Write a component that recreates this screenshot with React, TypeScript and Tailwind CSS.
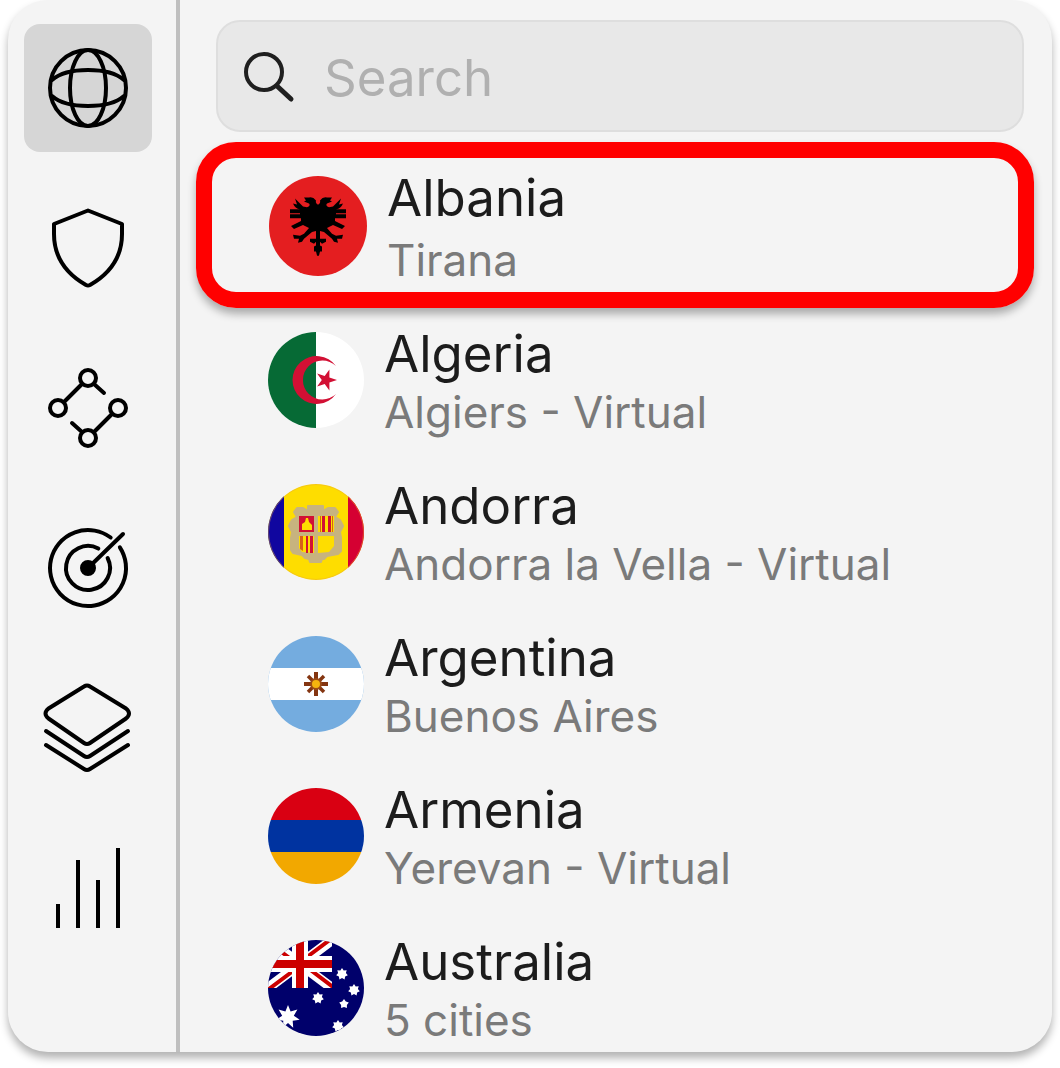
import type { ReactNode } from "react";

const line = {
  fill: "none",
  stroke: "#000",
  strokeWidth: 4,
  strokeLinecap: "round" as const,
  strokeLinejoin: "round" as const,
};

function GlobeIcon() {
  return (
    <svg viewBox="0 0 96 96" className="size-24" aria-hidden="true" {...line}>
      <circle cx="48" cy="48" r="38" />
      <ellipse cx="48" cy="48" rx="18" ry="38" />
      <path d="M12 40C20 33 33 30 48 30s28 3 36 10M12 56c8 7 21 10 36 10s28-3 36-10" />
    </svg>
  );
}

function ShieldIcon() {
  return (
    <svg viewBox="0 0 96 96" className="size-24" aria-hidden="true" {...line}>
      <path d="M48 10.500L82 24v10C82 56 71 73 50 85q-2 1-4 0C25 73 14 56 14 34V24Z" />
    </svg>
  );
}

function MeshIcon() {
  return (
    <svg viewBox="0 0 96 96" className="size-24" aria-hidden="true" {...line}>
      <circle cx="48" cy="18" r="8" />
      <circle cx="18" cy="48" r="8" />
      <circle cx="78" cy="48" r="8" />
      <circle cx="48" cy="78" r="8" />
      <path d="M42 24L24 42M54 24l10 9M72 54L54 72M42 72l-10-9" />
    </svg>
  );
}

function TargetIcon() {
  return (
    <svg viewBox="0 0 96 96" className="size-24" aria-hidden="true" {...line}>
      <path d="M70.650 17.500A38 38 0 1 0 79.870 27.300" />
      <path d="M58.330 28.570A22 22 0 1 0 67.600 38" />
      <circle cx="48" cy="48" r="6" fill="#000" />
      <path d="M48 48L83 14" />
    </svg>
  );
}

function LayersIcon() {
  return (
    <svg viewBox="0 0 96 96" className="size-24" aria-hidden="true" {...line}>
      <path d="M44 6.500q3-2 6 0L86 28.500q6 5 0 10L50 63q-3 2-6 0L8.500 38.500q-6-5 0-10Z" />
      <path d="M6 51L44 76q3 2 6 0L88 51" />
      <path d="M6 65L44 89q3 2 6 0L88 65" />
    </svg>
  );
}

function BarsIcon() {
  return (
    <svg viewBox="0 0 96 96" className="size-24" aria-hidden="true" {...line} strokeLinecap="butt">
      <path d="M18 64v24M38 20v68M58 40v48M78 8v80" />
    </svg>
  );
}

function SearchIcon() {
  return (
    <svg viewBox="0 0 56 56" className="size-14 shrink-0" aria-hidden="true" {...line} stroke="#1f1f1f">
      <circle cx="24" cy="24" r="18" />
      <path d="M37 38L51 51" strokeWidth="5" />
    </svg>
  );
}

function star(cx: number, cy: number, outer: number, inner: number, points: number, turn = -90) {
  return Array.from({ length: points * 2 }, (_, i) => {
    const r = i % 2 ? inner : outer;
    const a = ((turn + (i * 180) / points) * Math.PI) / 180;
    return `${(cx + r * Math.cos(a)).toFixed(1)},${(cy + r * Math.sin(a)).toFixed(1)}`;
  }).join(" ");
}

function Flag({ children }: { children: ReactNode }) {
  return (
    <svg viewBox="0 0 96 96" className="mt-2 size-24 shrink-0 rounded-full" aria-hidden="true">
      {children}
    </svg>
  );
}

const albania = (
  <svg
    viewBox="0 0 98 102"
    preserveAspectRatio="none"
    className="mt-2 h-[100px] w-[98px] shrink-0 rounded-[50%]"
    aria-hidden="true"
  >
    <path fill="#e41e20" d="M0 0h98v102H0z" />
    <g id="eagle-half">
      <path d="M50 30Q46 28 47 25Q44 21 40 22L35 22L37 25L35 26L40 28Q42 30 38 32L34 31L26 23L28 29L24 28Q26 33 31 34H21V38H31L31 39L21 39V43L32 43L32 46L22 51L25 54L34 50L40 53L35 59L31 61L24 60L25 64L30 64L29 68L33 67L35 64L43 57L47 56V64L41 64L41 67L45 69L47 67V71L45 72L45 77L47 77L48 81H50Z" />
    </g>
    <use href="#eagle-half" transform="matrix(-1 0 0 1 98 0)" />
  </svg>
);

const algeria = (
  <Flag>
    <path fill="#fff" d="M0 0h96v96H0z" />
    <path fill="#066a35" d="M0 0h48v96H0z" />
    <path fill="#d21034" d="M68 34A24 24 0 1 0 68 62A19.500 19.500 0 1 1 68 34Z" />
    <polygon fill="#d21034" points={star(58, 48, 11, 4.2, 5, 0)} />
  </Flag>
);

const andorra = (
  <Flag>
    <path fill="#fedd00" d="M0 0h96v96H0z" />
    <path fill="#10069f" d="M0 0h16v96H0z" />
    <path fill="#d50032" d="M80 0h16v96H80z" />
    <path
      fill="#c7b37f"
      strokeLinejoin="round"
      stroke="#c7b37f"
      strokeWidth="2"
      d="M29 24H35L40 27V22H55V27L60 24H67L70 28L67 33L72 36L75 42L72 48L73 54V67L70 70L59 72L56 75L54 75L53 78H42L41 75L37 74L34 71L25 69L23 66V54L24 48L21 42L24 36L29 33L26 28Z"
    />
    <path fill="#d21034" d="M31 32h15v16H31z" />
    <path fill="#fedd00" d="M34 46v-6l3-2 1-4h2l1 4 3 3v5zM50 32h16v16H50zM31 52h15v17l-12-1-3-4zM50 52h16v10l-5 6-11 1z" />
    <path fill="#d21034" d="M54 32h3v16h-3zM60 32h3v16h-3zM38 52h2v17h-2zM42 52h3v17h-3z" />
    <path fill="#d86018" d="M52 32h1v16h-1zM64 32h1v16h-1zM32 52h3v15l-3-2z" />
    <path fill="#c7b37f" d="M46 32h4v40h-4zM30 48h38v4H30z" />
    <circle cx="48" cy="48" r="47.500" fill="none" stroke="#e8a33d" strokeOpacity="0.4" />
  </Flag>
);

const argentina = (
  <Flag>
    <path fill="#74acdf" d="M0 0h96v96H0z" />
    <path fill="#fff" d="M0 32h96v32H0z" />
    <path stroke="#843511" strokeWidth="4" d="M48 36v24M36 48h24" />
    <path stroke="#843511" strokeWidth="3.500" d="M40 40l16 16M56 40L40 56" />
    <circle cx="48" cy="48" r="5" fill="#f6b40e" stroke="#9c4b16" strokeWidth="2" />
  </Flag>
);

const armenia = (
  <Flag>
    <path fill="#d90012" d="M0 0h96v32H0z" />
    <path fill="#0033a0" d="M0 32h96v32H0z" />
    <path fill="#f2a800" d="M0 64h96v32H0z" />
  </Flag>
);

const australia = (
  <Flag>
    <defs>
      <clipPath id="canton">
        <path d="M0 0h64v48H0z" />
      </clipPath>
    </defs>
    <path fill="#00006b" d="M0 0h96v96H0z" />
    <g clipPath="url(#canton)">
      <path stroke="#fff" strokeWidth="10" d="M0 0l64 48M64 0L0 48" />
      <path stroke="#cc0000" strokeWidth="4" d="M-1 1l33 25M65 47L32 22M63-1L31 23M1 49l32-24" />
      <path fill="#fff" d="M24 0h16v48H24zM0 16h64v16H0z" />
      <path fill="#cc0000" d="M28 0h8v48h-8zM0 20h64v8H0z" />
    </g>
    <g fill="#fff">
      <polygon points={star(20, 77, 12, 6, 7)} />
      <polygon points={star(74, 34, 6, 4, 7)} />
      <polygon points={star(86, 50, 6, 4, 7)} />
      <polygon points={star(50, 58, 6, 4, 7)} />
      <polygon points={star(76, 64, 5, 3, 5)} />
      <polygon points={star(70, 86, 6, 4, 7)} />
    </g>
  </Flag>
);

const categories = [
  { label: "Countries", icon: <GlobeIcon /> },
  { label: "Security", icon: <ShieldIcon /> },
  { label: "Mesh", icon: <MeshIcon /> },
  { label: "Target", icon: <TargetIcon /> },
  { label: "Layers", icon: <LayersIcon /> },
  { label: "Statistics", icon: <BarsIcon /> },
];

const countries = [
  { name: "Albania", detail: "Tirana", flag: albania, highlighted: true },
  { name: "Algeria", detail: "Algiers - Virtual", flag: algeria },
  { name: "Andorra", detail: "Andorra la Vella - Virtual", flag: andorra },
  { name: "Argentina", detail: "Buenos Aires", flag: argentina },
  { name: "Armenia", detail: "Yerevan - Virtual", flag: armenia },
  { name: "Australia", detail: "5 cities", flag: australia },
];

export default function App() {
  return (
    <div className="bg-white px-2 pb-4 font-['Inter',sans-serif]">
      <div className="flex rounded-[40px] bg-[#f4f4f4] shadow-[0_6px_8px_rgba(0,0,0,0.3)]">
        <nav className="flex shrink-0 flex-col gap-8 border-r-4 border-[#bfbfbf] py-6 pr-6 pl-4">
          {categories.map((c, i) => (
            <button
              key={c.label}
              type="button"
              aria-label={c.label}
              className={
                i === 0
                  ? "flex size-32 items-center justify-center rounded-2xl bg-[#d6d6d6]"
                  : "flex size-32 items-center justify-center rounded-2xl"
              }
            >
              {c.icon}
            </button>
          ))}
        </nav>
        <main className="min-w-0 flex-1 pt-5 pr-7 pl-9">
          <label className="flex h-28 items-center gap-7 rounded-3xl border-2 border-[#dedede] bg-[#e8e8e8] px-[22px]">
            <SearchIcon />
            <input
              type="text"
              aria-label="Search"
              placeholder="Search"
              className="min-w-0 flex-1 bg-transparent pt-1 text-[51px] leading-[60px] text-[#1c1c1c] outline-none placeholder:text-[#b0b0b0]"
            />
          </label>
          <ul className="mt-5">
            {countries.map((c) => (
              <li key={c.name} className="group relative last:pb-1">
                {c.highlighted && (
                  <div className="pointer-events-none absolute -top-[10px] -right-[10px] -bottom-1 -left-5 rounded-[40px] border-[16px] border-[#ff0000] shadow-[0_6px_8px_rgba(0,0,0,0.3)]" />
                )}
                <button
                  type="button"
                  className={
                    c.highlighted
                      ? "relative flex w-full items-start gap-5 pt-4 pb-4 pl-[53px] text-left"
                      : "relative flex w-full items-start gap-5 pt-5 pb-4 pl-[52px] text-left group-last:pb-0"
                  }
                >
                  {c.flag}
                  <span className="block min-w-0">
                    <span
                      className={
                        c.highlighted
                          ? "block pb-1 text-[51px] leading-[60px] whitespace-nowrap text-[#1c1c1c]"
                          : "block text-[51px] leading-[60px] whitespace-nowrap text-[#1c1c1c]"
                      }
                    >
                      {c.name}
                    </span>
                    <span className="block text-[44px] leading-[56px] whitespace-nowrap text-[#7a7a7a]">{c.detail}</span>
                  </span>
                </button>
              </li>
            ))}
          </ul>
        </main>
      </div>
    </div>
  );
}
